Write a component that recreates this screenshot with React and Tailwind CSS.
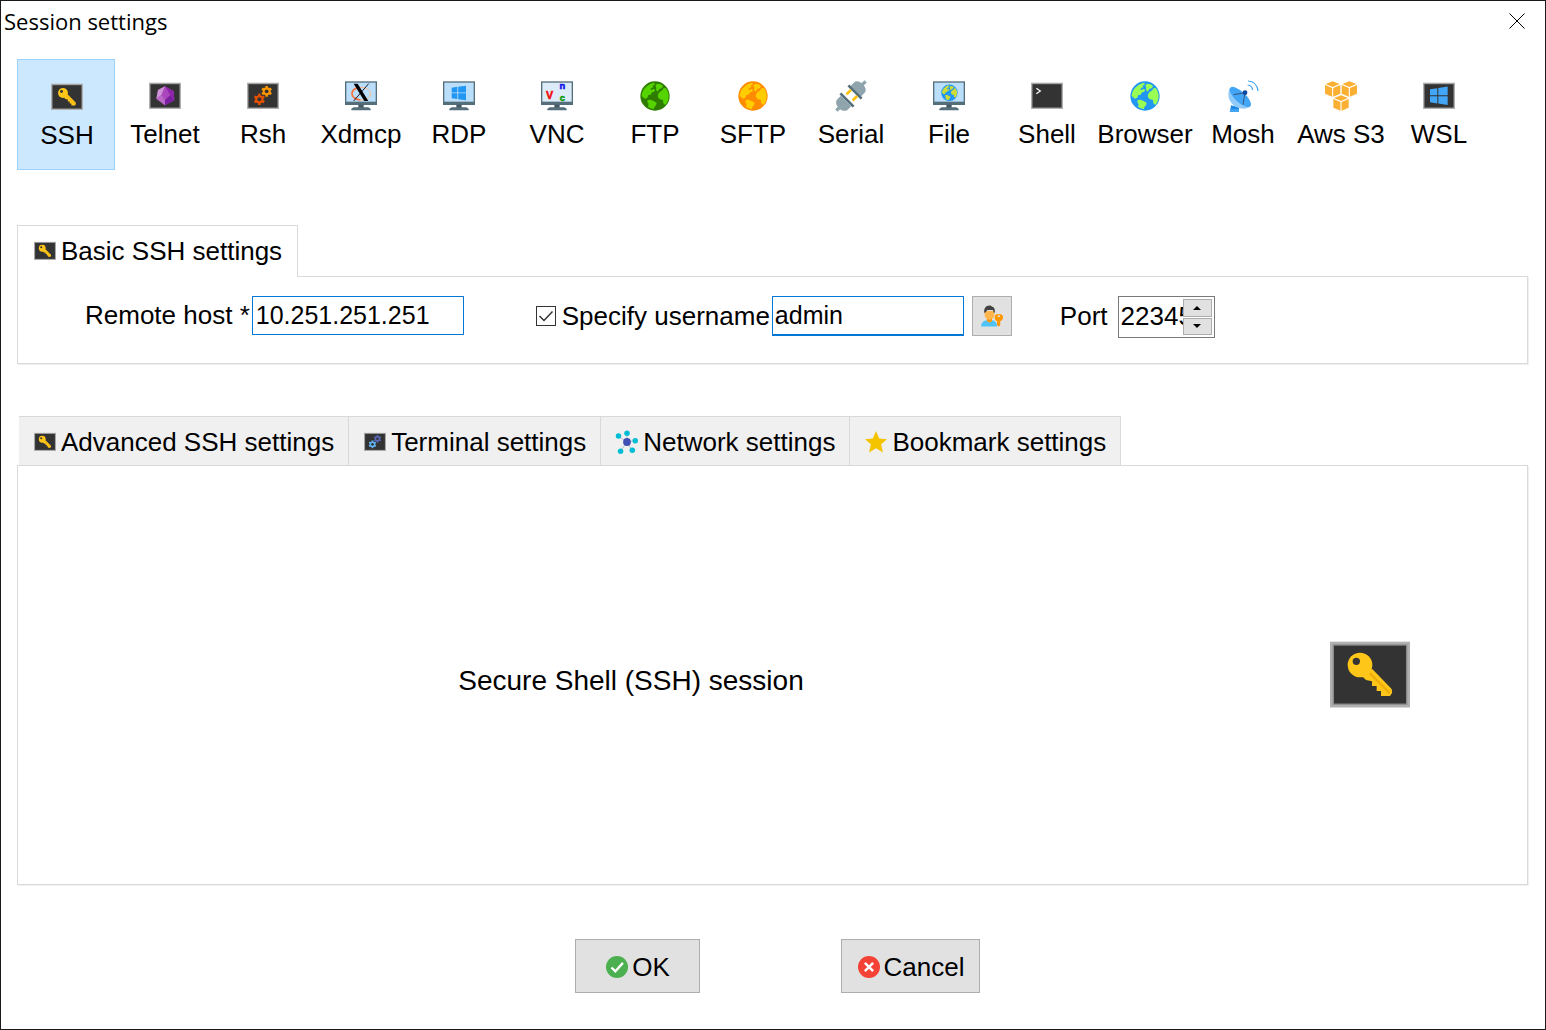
import { useState } from "react";

/* ---------- Icons ---------- */

function Icon({ className, children }) {
  return (
    <svg viewBox="0 0 48 48" className={className} aria-hidden="true">
      {children}
    </svg>
  );
}

function ConsoleFrame() {
  return (
    <>
      <rect x="0" y="4" width="48" height="39.5" fill="#b0b0b0" />
      <rect x="1.6" y="5.6" width="44.8" height="36.3" fill="#8a8a8a" />
      <rect x="2.4" y="6.4" width="43.2" height="34.7" fill="#333333" />
    </>
  );
}

function MonitorFrame({ screen = "#bbdefb" }) {
  return (
    <>
      <rect x="0" y="2" width="48" height="35.5" fill="#546e7a" />
      <rect x="2" y="4" width="44" height="28.5" fill={screen} />
      <rect x="20" y="37" width="8" height="5" fill="#455a64" />
      <path d="M13 41h22l3.5 2v2.5h-29V43z" fill="#546e7a" />
    </>
  );
}

function Gear({ x, y, size, color }) {
  return (
    <g transform={`translate(${x} ${y}) scale(${size})`}>
      {[0, 60, 120].map((a) => (
        <rect key={a} x="-1.9" y="-8.5" width="3.8" height="17" fill={color} transform={`rotate(${a})`} />
      ))}
      <circle r="6.300" fill={color} />
      <circle r="3" fill="#333333" />
    </g>
  );
}

function GlobeShape({ sea, land }) {
  return (
    <>
      <circle cx="24" cy="24" r="22" fill={sea} />
      <g fill={land}>
        <path d="M12 9.500C15 6.500 19 4.500 23 4l.5 3-3 1.500 1 2.500-3 1-1.500 2.500 2.500.5 2-2 2.500 1.500-1 3-3.500 1-2 3.500-3.500.5-1.500 4-3.500 1.500L4 24c.2-5.500 3-11 8-14.500z" />
        <path d="M27 5.500l5.500 1 3.500 2.500-1.500 3-4 1.500-2.500 4-2.500-3 .5-3-1.500-3z" />
        <path d="M31 18l4-2.500 2-3.500 3.500.5C43 16 44.500 20 44.500 24c0 3.500-1 7-2.500 10l-2.500 3.500-3-2.500-.5-5-5.500-1.500-2.500-4 1-4z" />
        <path d="M13 30l4.500-.5 5 2.500 4 2-1 4-2.500 2.500-.5 3c-3.500-.2-7-2-9-3.500l1-4-2-3z" />
      </g>
    </>
  );
}

function WindowsShape({ color }) {
  return (
    <path
      fill={color}
      d="M13 11.500l8.500-1.300v8.600H13zM22.800 10l11.700-1.500v10.300H22.800zM13 20h8.500v8.600L13 27.300zM22.800 20h11.700v10.300l-11.700-1.500z"
    />
  );
}

function KeyIcon({ className }) {
  return (
    <Icon className={className}>
      <ConsoleFrame />
      <path
        fill="#ffc61a"
        d="M25.200 20.200L37 32.400l.3 2.200-1.300 2h-5.400v-3H28v-3h-2.800v-2.800l-3.600-.8-2.100-2z"
      />
      <circle cx="18" cy="18" r="7.4" fill="#ffc61a" />
      <circle cx="15.800" cy="15.800" r="2.200" fill="#333333" />
      <path d="M24 23l12 12" stroke="#f0ae0c" strokeWidth="1.500" />
    </Icon>
  );
}

function GemIcon({ className }) {
  return (
    <Icon className={className}>
      <ConsoleFrame />
      <path fill="#ab47bc" d="M24 9.500L37 17l1 13.500-14 7.500L11 28l2.500-13z" />
      <path fill="#ce93d8" d="M24 9.500L13.500 15 11 28l7.500-5.500z" />
      <path fill="#ba68c8" d="M11 28l7.500-5.500L24 30v8z" />
      <path fill="#7b1fa2" d="M24 38v-8l8-7.500 6 8z" />
      <path fill="#8e24aa" d="M24 9.500L37 17l1 13.500-6-8z" />
    </Icon>
  );
}

function GearsIcon({ className, back = "#ff9800", front = "#e65100" }) {
  return (
    <Icon className={className}>
      <ConsoleFrame />
      <Gear x={29.5} y={17} size={0.95} color={back} />
      <Gear x={18.5} y={29} size={1} color={front} />
    </Icon>
  );
}

function XIcon({ className }) {
  return (
    <Icon className={className}>
      <MonitorFrame />
      <ellipse cx="24.500" cy="20.500" rx="14" ry="9.500" fill="none" stroke="#ffb98a" strokeWidth="1.500" />
      <path d="M20 11.500c-6 1.500-9.500 5-9.500 9 0 5 5.500 9 12.500 9.500" fill="none" stroke="#f4743b" strokeWidth="2.500" />
      <path d="M13 5.500h6L35 31.500h-6z" fill="#000" />
      <path d="M35.500 5.500L13 31.500" stroke="#000" strokeWidth="1.300" />
    </Icon>
  );
}

function RdpIcon({ className }) {
  return (
    <Icon className={className}>
      <MonitorFrame />
      <WindowsShape color="#2196f3" />
    </Icon>
  );
}

function VncIcon({ className }) {
  return (
    <Icon className={className}>
      <MonitorFrame screen="#dcebf8" />
      <g fontFamily="'Liberation Sans', sans-serif" fontWeight="700" textAnchor="middle" strokeWidth=".8">
        <text x="13" y="29" fontSize="16" fill="#f50a0a" stroke="#f50a0a">V</text>
        <text x="32" y="14" fontSize="14" fill="#1010e8" stroke="#1010e8">n</text>
        <text x="32" y="31" fontSize="14" fill="#0a9a0a" stroke="#0a9a0a">c</text>
      </g>
    </Icon>
  );
}

function FtpIcon({ className }) {
  return (
    <Icon className={className}>
      <GlobeShape sea="#2e7d00" land="#55d400" />
    </Icon>
  );
}

function SftpIcon({ className }) {
  return (
    <Icon className={className}>
      <GlobeShape sea="#ff8c00" land="#ffcc00" />
    </Icon>
  );
}

function BrowserIcon({ className }) {
  return (
    <Icon className={className}>
      <GlobeShape sea="#2196f3" land="#99ff55" />
    </Icon>
  );
}

function SerialIcon({ className }) {
  return (
    <Icon className={className}>
      <g transform="rotate(45 24 24)">
        <path fill="#90a4ae" d="M21.500-7h5v8h-5zM13 14V6c0-4 4-7 11-7s11 3 11 7v8z" />
        <path fill="#546e7a" d="M10 13.500h28v4H10z" />
        <path fill="#ffc107" d="M15.500 17.500h4V27h-4zM28.500 17.500h4V27h-4z" />
        <path fill="#546e7a" d="M10 30.500h28v4H10z" />
        <path fill="#90a4ae" d="M13 34.500h22V42c0 4-4 7-8.500 7.500V55h-5v-5.500C17 49 13 46 13 42z" />
      </g>
    </Icon>
  );
}

function FileIcon({ className }) {
  return (
    <Icon className={className}>
      <MonitorFrame />
      <g transform="translate(11.200 5.800) scale(.56)">
        <GlobeShape sea="#2196f3" land="#cddc39" />
      </g>
    </Icon>
  );
}

function ShellIcon({ className }) {
  return (
    <Icon className={className}>
      <ConsoleFrame />
      <path d="M8 12.500l6 4-6 4" fill="none" stroke="#fff" strokeWidth="1.800" />
    </Icon>
  );
}

function DishIcon({ className }) {
  return (
    <Icon className={className}>
      <path fill="#1e88e5" d="M6 38l12 3v7H4.500z" />
      <path fill="#42a5f5" d="M5 44h13v4H4z" />
      <path fill="#90caf9" d="M4.500 11.500C-1 22 3 34 13 40c8 4 17 4 22-.5z" />
      <ellipse cx="20" cy="25.500" rx="20.500" ry="8" transform="rotate(43 20 25.500)" fill="#42a5f5" />
      <path d="M10 22l17-3-3 18" fill="none" stroke="#37577c" strokeWidth="1.500" />
      <circle cx="27" cy="19" r="3.600" fill="#0d47a1" />
      <path d="M31 7.500c4 .5 7 3.500 7.500 7.500M31.500 1.500C40 2 45.500 8 46.500 16.500" fill="none" stroke="#42a5f5" strokeWidth="1.800" />
    </Icon>
  );
}

function Cube({ x, y }) {
  return (
    <g transform={`translate(${x} ${y})`} fill="#fbb034">
      <path d="M0-11.500L10.500-7.500 0-3-10.500-7.500z" />
      <path d="M-11.500-6L-.8-1.500v13L-11.500 7z" />
      <path d="M11.500-6L.8-1.500v13L11.500 7z" />
    </g>
  );
}

function AwsIcon({ className }) {
  return (
    <Icon className={className}>
      <Cube x={11.5} y={13.5} />
      <Cube x={36.5} y={13.5} />
      <Cube x={24} y={34.5} />
    </Icon>
  );
}

function WslIcon({ className }) {
  return (
    <Icon className={className}>
      <ConsoleFrame />
      <path
        fill="#42a5f5"
        d="M10.500 14l11-1.800v10.600h-11zM23 12l14-2.200v13H23zM10.500 24.500h11v10.600l-11-1.800zM23 24.500h14v13l-14-2.200z"
      />
    </Icon>
  );
}

function NetworkIcon({ className }) {
  return (
    <Icon className={className}>
      <path d="M24 24V6M24 24L6 12M24 24l17-3M24 24l11 18M24 24L10 43" stroke="#b0bec5" strokeWidth="2" />
      <g fill="#00bcd4">
        <circle cx="24" cy="5" r="6" />
        <circle cx="5.500" cy="11" r="6" />
        <circle cx="42" cy="21" r="6" />
        <circle cx="35.500" cy="42" r="6" />
        <circle cx="10" cy="44" r="6" />
      </g>
      <circle cx="24" cy="24" r="8.500" fill="#3f51b5" />
    </Icon>
  );
}

function StarIcon({ className }) {
  return (
    <Icon className={className}>
      <path fill="#f5c400" d="M24 0l7 16.500 17 1.300-12.700 11.300L39 47 24 37.500 9 47l3.700-17.900L0 17.800l17-1.300z" />
    </Icon>
  );
}

function UserKeyIcon({ className }) {
  return (
    <Icon className={className}>
      <path fill="#4fc3f7" d="M0 47c0-8 4-12 12-14h13c6 1.500 10 5 10 14z" />
      <path fill="#ff9800" d="M13 29h11v6c-2 4-9 4-11 0z" />
      <path fill="#ffb74d" d="M8 13h21v9c0 6-5 10-10.500 10S8 28 8 22z" />
      <path fill="#424242" d="M7 17C6 7 11 1 18 1c3 0 5 1 6 2.500 5 1 7 6 6 13.500h-2l-2-6H14l-5 6z" />
      <path
        fill="#ff9800"
        d="M33 20h11l4 4v6l-4 5h-2v9l-3 3-4-3v-9h-2l-3-5v-6zM36.500 23v3h5v-3z"
        fillRule="evenodd"
      />
    </Icon>
  );
}

function OkIcon({ className }) {
  return (
    <Icon className={className}>
      <circle cx="24" cy="24" r="24" fill="#4caf50" />
      <path d="M12 25l8.500 8.500L37 15" fill="none" stroke="#fff" strokeWidth="5" />
    </Icon>
  );
}

function CancelIcon({ className }) {
  return (
    <Icon className={className}>
      <circle cx="24" cy="24" r="24" fill="#f44336" />
      <path d="M15 15l18 18M33 15L15 33" stroke="#fff" strokeWidth="5.500" />
    </Icon>
  );
}

function TerminalGearsIcon({ className }) {
  return <GearsIcon className={className} back="#5c6bc0" front="#64b5f6" />;
}

/* ---------- Data ---------- */

const sessionTypes = [
  { name: "SSH", icon: KeyIcon },
  { name: "Telnet", icon: GemIcon },
  { name: "Rsh", icon: GearsIcon },
  { name: "Xdmcp", icon: XIcon },
  { name: "RDP", icon: RdpIcon },
  { name: "VNC", icon: VncIcon },
  { name: "FTP", icon: FtpIcon },
  { name: "SFTP", icon: SftpIcon },
  { name: "Serial", icon: SerialIcon },
  { name: "File", icon: FileIcon },
  { name: "Shell", icon: ShellIcon },
  { name: "Browser", icon: BrowserIcon },
  { name: "Mosh", icon: DishIcon },
  { name: "Aws S3", icon: AwsIcon },
  { name: "WSL", icon: WslIcon },
];

const settingsTabs = [
  { name: "Advanced SSH settings", icon: KeyIcon },
  { name: "Terminal settings", icon: TerminalGearsIcon },
  { name: "Network settings", icon: NetworkIcon },
  { name: "Bookmark settings", icon: StarIcon },
];

/* ---------- Page ---------- */

export default function App() {
  const [session, setSession] = useState("SSH");
  const [host, setHost] = useState("10.251.251.251");
  const [useName, setUseName] = useState(true);
  const [username, setUsername] = useState("admin");
  const [port, setPort] = useState("22345");

  const stepPort = (step) => setPort(String(Number(port) + step));

  return (
    <div className="flex min-h-screen flex-col border border-[#1a1a1a] bg-white font-['Liberation_Sans',Arial,sans-serif] text-[26px] leading-[30px] text-black">
      {/* Title bar */}
      <header className="flex h-10 items-center justify-between pr-5 pl-[3px]">
        <h1 className="font-['Open_Sans',sans-serif] text-[22px]">Session settings</h1>
        <button type="button" aria-label="Close">
          <svg viewBox="0 0 16 16" className="size-4" aria-hidden="true">
            <path d="M.5.5l15 15M15.500.5l-15 15" stroke="#000" strokeWidth="1" />
          </svg>
        </button>
      </header>

      <main className="flex flex-1 flex-col pt-[18px] pr-[17px] pl-4">
        {/* Session types */}
        <nav className="flex">
          {sessionTypes.map(({ name, icon: TypeIcon }) => (
            <button
              key={name}
              type="button"
              aria-pressed={session === name}
              onClick={() => setSession(name)}
              className={`flex h-[111px] w-[98px] flex-col items-center gap-[7px] pt-[21px] pl-[2px] whitespace-nowrap ${
                session === name ? "border border-[#99d1ff] bg-[#cce8ff]" : ""
              }`}
            >
              <TypeIcon className="size-8 shrink-0 overflow-visible" />
              <span>{name}</span>
            </button>
          ))}
        </nav>

        {/* Basic settings */}
        <section className="mt-[55px]">
          <div role="tablist" className="flex">
            <button
              type="button"
              role="tab"
              aria-selected="true"
              className="-mb-px flex h-[52px] items-center gap-[5px] border border-b-0 border-[#d9d9d9] bg-white pr-[15px] pb-[2px] pl-4"
            >
              <KeyIcon className="size-[22px]" />
              Basic SSH settings
            </button>
          </div>

          <div className="flex h-[88px] items-start border border-[#d9d9d9] pt-[19px] pl-[67px] shadow-[1px_1px_0_#f0f0f0]">
            <label htmlFor="host" className="pt-1 pr-[2px]">
              Remote host *
            </label>
            <input
              id="host"
              value={host}
              onChange={(e) => setHost(e.target.value)}
              className="h-[39px] w-[212px] border border-[#0078d7] px-[3px] text-[25px] outline-none"
            />

            <label className="ml-[72px] flex items-center gap-[6px] pt-[5px] pr-[2px]">
              <span className="grid">
                <input
                  type="checkbox"
                  checked={useName}
                  onChange={(e) => setUseName(e.target.checked)}
                  className="peer col-start-1 row-start-1 size-5 appearance-none border border-[#333333] bg-white"
                />
                <svg
                  viewBox="0 0 20 20"
                  className="pointer-events-none invisible col-start-1 row-start-1 size-5 peer-checked:visible"
                  aria-hidden="true"
                >
                  <path d="M3.500 10l4.500 4.500L16.500 5.500" fill="none" stroke="#333" strokeWidth="1.500" />
                </svg>
              </span>
              Specify username
            </label>
            <input
              aria-label="Username"
              value={username}
              onChange={(e) => setUsername(e.target.value)}
              className="h-10 w-[192px] border border-b-2 border-[#0078d7] px-[2px] text-[25px] outline-none"
            />
            <button
              type="button"
              aria-label="Manage users"
              className="ml-2 flex size-10 items-center justify-center border border-[#adadad] bg-[#e1e1e1]"
            >
              <UserKeyIcon className="size-[22px]" />
            </button>

            <label htmlFor="port" className="ml-12 pt-[5px] pr-[10px]">
              Port
            </label>
            <div className="flex h-[42px] w-[97px] border border-[#7a7a7a] p-[2px]">
              <input
                id="port"
                inputMode="numeric"
                value={port}
                onChange={(e) => setPort(e.target.value)}
                className="h-[34px] min-w-0 flex-1 outline-none"
              />
              <div className="flex w-[29px] flex-col gap-px">
                <button
                  type="button"
                  aria-label="Increase port"
                  onClick={() => stepPort(1)}
                  className="flex h-[18px] items-center justify-center border border-[#adadad] bg-[#e1e1e1]"
                >
                  <svg viewBox="0 0 8 4" className="h-1 w-2" aria-hidden="true">
                    <path d="M0 4l4-4 4 4z" />
                  </svg>
                </button>
                <button
                  type="button"
                  aria-label="Decrease port"
                  onClick={() => stepPort(-1)}
                  className="flex h-[18px] items-center justify-center border border-[#adadad] bg-[#e1e1e1]"
                >
                  <svg viewBox="0 0 8 4" className="h-1 w-2" aria-hidden="true">
                    <path d="M0 0l4 4 4-4z" />
                  </svg>
                </button>
              </div>
            </div>
          </div>
        </section>

        {/* Detail settings */}
        <section className="mt-[52px] flex flex-1 flex-col">
          <div role="tablist" className="flex pl-[2px]">
            {settingsTabs.map(({ name, icon: TabIcon }) => (
              <button
                key={name}
                type="button"
                role="tab"
                aria-selected="false"
                className="flex h-[49px] items-center gap-[5px] border-t border-r border-[#d9d9d9] bg-[#f0f0f0] pt-[2px] pr-[14px] pl-[15px]"
              >
                <TabIcon className="size-[22px] shrink-0 overflow-visible" />
                {name}
              </button>
            ))}
          </div>

          <div className="flex flex-1 items-center border border-[#d9d9d9] pr-[31px] shadow-[1px_1px_0_#f0f0f0]">
            <p className="flex-1 pt-3 text-center text-[28px]">Secure Shell (SSH) session</p>
            <div className="flex w-[252px] justify-center">
              <KeyIcon className="size-20" />
            </div>
          </div>
        </section>
      </main>

      {/* Actions */}
      <footer className="flex justify-center gap-[141px] pt-[54px] pb-9 pl-2">
        <button
          type="button"
          className="flex h-[54px] w-[125px] items-center justify-center gap-1 border border-[#adadad] bg-[#e1e1e1] pt-[2px] pl-[2px]"
        >
          <OkIcon className="size-[22px]" />
          OK
        </button>
        <button
          type="button"
          className="flex h-[54px] w-[139px] items-center justify-center gap-1 border border-[#adadad] bg-[#e1e1e1] pt-[2px] pl-[2px]"
        >
          <CancelIcon className="size-[22px]" />
          Cancel
        </button>
      </footer>
    </div>
  );
}
